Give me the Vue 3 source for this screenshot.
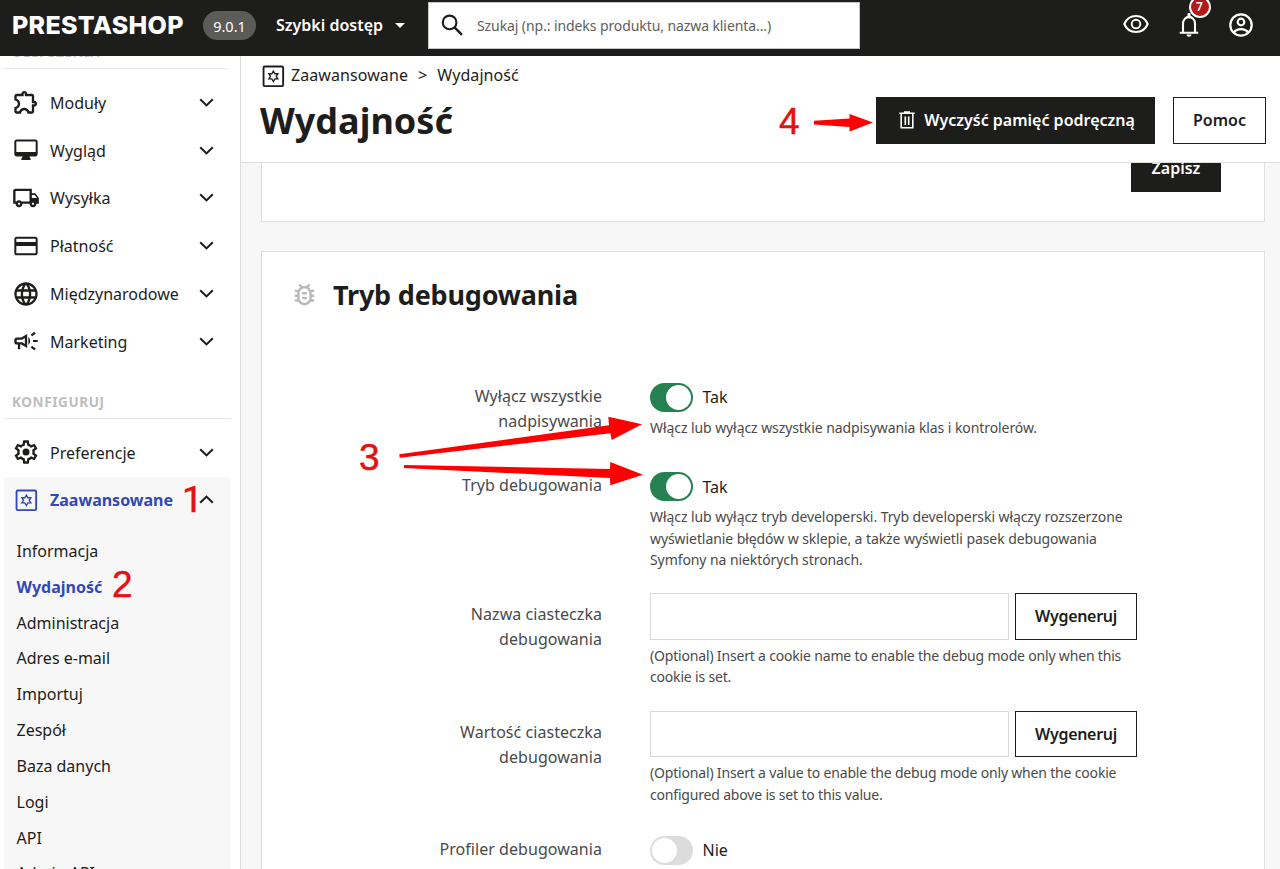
<script setup>
const icons = {
  modules: 'M10.5 4.5c.28 0 .5.22.5.5v2h6v6h2c.28 0 .5.22.5.5s-.22.5-.5.5h-2v6h-2.12c-.68-1.75-2.39-3-4.38-3s-3.7 1.25-4.38 3H4v-2.12c1.75-.68 3-2.39 3-4.38 0-1.99-1.24-3.7-2.99-4.38L4 7h6V5c0-.28.22-.5.5-.5m0-2C9.12 2.5 8 3.62 8 5H4c-1.1 0-1.99.9-1.99 2v3.8h.29c1.49 0 2.7 1.21 2.7 2.7s-1.21 2.7-2.7 2.7H2V20c0 1.1.9 2 2 2h3.8v-.3c0-1.49 1.21-2.7 2.7-2.7s2.7 1.21 2.7 2.7v.3H17c1.1 0 2-.9 2-2v-4c1.38 0 2.5-1.12 2.5-2.5S20.38 11 19 11V7c0-1.1-.9-2-2-2h-4c0-1.38-1.12-2.5-2.5-2.5z',
  design: 'M20 3H4c-1.1 0-2 .9-2 2v10.500c0 1.100.9 2 2 2h5.200l-1.200 2v1h8v-1l-1.200-2H20c1.100 0 2-.9 2-2V5c0-1.100-.9-2-2-2zm.3 10.700H3.700V4.800h16.600v8.900z',
  shipping: 'M20 8h-3V4H3c-1.1 0-2 .9-2 2v11h2c0 1.66 1.34 3 3 3s3-1.34 3-3h6c0 1.66 1.34 3 3 3s3-1.34 3-3h2v-5l-3-4zm-.5 1.5l1.96 2.5H17V9.5h2.5zM6 18c-.55 0-1-.45-1-1s.45-1 1-1 1 .45 1 1-.45 1-1 1zm2.22-3c-.55-.61-1.33-1-2.22-1s-1.67.39-2.22 1H3V6h12v9H8.22zM18 18c-.55 0-1-.45-1-1s.45-1 1-1 1 .45 1 1-.45 1-1 1z',
  payment: 'M20 4H4c-1.11 0-1.99.89-1.99 2L2 18c0 1.11.89 2 2 2h16c1.11 0 2-.89 2-2V6c0-1.11-.89-2-2-2zm.3 14.3H3.7V12h16.6v6.3zm0-9.8H3.7V5.7h16.6v2.8z',
  globe: 'M11.99 2C6.47 2 2 6.48 2 12s4.47 10 9.99 10C17.52 22 22 17.52 22 12S17.52 2 11.99 2zm6.93 6h-2.95c-.32-1.25-.78-2.45-1.38-3.56 1.84.63 3.37 1.91 4.33 3.56zM12 4.04c.83 1.2 1.48 2.53 1.91 3.96h-3.82c.43-1.43 1.08-2.76 1.91-3.96zM4.26 14C4.1 13.36 4 12.69 4 12s.1-1.36.26-2h3.38c-.08.66-.14 1.32-.14 2 0 .68.06 1.34.14 2H4.26zm.82 2h2.95c.32 1.25.78 2.45 1.38 3.56-1.84-.63-3.37-1.9-4.33-3.56zm2.95-8H5.08c.96-1.66 2.49-2.93 4.33-3.56C8.81 5.55 8.35 6.75 8.03 8zM12 19.96c-.83-1.2-1.48-2.53-1.91-3.96h3.82c-.43 1.43-1.08 2.76-1.91 3.96zM14.34 14H9.66c-.09-.66-.16-1.32-.16-2 0-.68.07-1.35.16-2h4.68c.09.65.16 1.32.16 2 0 .68-.07 1.34-.16 2zm.25 5.56c.6-1.11 1.06-2.31 1.38-3.56h2.95c-.96 1.65-2.49 2.93-4.33 3.56zM16.36 14c.08-.66.14-1.32.14-2 0-.68-.06-1.34-.14-2h3.38c.16.64.26 1.31.26 2s-.1 1.36-.26 2h-3.38z',
  marketing: 'M18 11.2v1.6h4v-1.6h-4zM16 17.61c.96.71 2.21 1.65 3.2 2.39.4-.53.8-1.07 1.2-1.6-.99-.74-2.24-1.68-3.2-2.4-.4.54-.8 1.08-1.2 1.61zM20.4 5.6c-.4-.53-.8-1.07-1.2-1.6-.99.74-2.24 1.68-3.2 2.4.4.53.8 1.07 1.2 1.6.96-.72 2.21-1.65 3.2-2.4zM4 9c-1.1 0-2 .9-2 2v2c0 1.1.9 2 2 2h1v4h2v-4h1l5 3V6L8 9H4zm5.03 1.71L11 9.53v4.94l-1.97-1.18-.48-.29H4v-2h4.55l.48-.29zM15.5 12c0-1.33-.58-2.53-1.5-3.35v6.69c.92-.81 1.5-2.01 1.5-3.34z',
  settings: 'M19.43 12.98c.04-.32.07-.64.07-.98 0-.34-.03-.66-.07-.98l2.11-1.65c.19-.15.24-.42.12-.64l-2-3.46c-.09-.16-.26-.25-.44-.25-.06 0-.12.01-.17.03l-2.49 1c-.52-.4-1.08-.73-1.69-.98l-.38-2.65C14.46 2.18 14.25 2 14 2h-4c-.25 0-.46.18-.49.42l-.38 2.65c-.61.25-1.17.59-1.69.98l-2.49-1c-.06-.02-.12-.03-.18-.03-.17 0-.34.09-.43.25l-2 3.46c-.13.22-.07.49.12.64l2.11 1.65c-.04.32-.07.65-.07.98 0 .33.03.66.07.98l-2.11 1.65c-.19.15-.24.42-.12.64l2 3.46c.09.16.26.25.44.25.06 0 .12-.01.17-.03l2.49-1c.52.4 1.08.73 1.69.98l.38 2.65c.03.24.24.42.49.42h4c.25 0 .46-.18.49-.42l.38-2.65c.61-.25 1.17-.59 1.69-.98l2.49 1c.06.02.12.03.18.03.17 0 .34-.09.43-.25l2-3.46c.12-.22.07-.49-.12-.64l-2.11-1.65zm-1.98-1.71c.04.31.05.52.05.73 0 .21-.02.43-.05.73l-.14 1.13.89.7 1.08.84-.7 1.21-1.27-.51-1.04-.42-.9.68c-.43.32-.84.56-1.25.73l-1.06.43-.16 1.13-.2 1.35h-1.4l-.19-1.35-.16-1.13-1.06-.43c-.43-.18-.83-.41-1.23-.71l-.91-.7-1.06.43-1.27.51-.7-1.21 1.08-.84.89-.7-.14-1.13c-.03-.31-.05-.54-.05-.74s.02-.43.05-.73l.14-1.13-.89-.7-1.08-.84.7-1.21 1.27.51 1.04.42.9-.68c.43-.32.84-.56 1.25-.73l1.06-.43.16-1.13.2-1.35h1.39l.19 1.35.16 1.13 1.06.43c.43.18.83.41 1.23.71l.91.7 1.06-.43 1.27-.51.7 1.21-1.07.85-.89.7.14 1.13zM12 9a3 3 0 1 0 0 6 3 3 0 1 0 0-6z',
  bug: 'M20 8h-2.81c-.45-.78-1.07-1.45-1.82-1.96L17 4.41 15.59 3l-2.17 2.17C12.96 5.06 12.49 5 12 5c-.49 0-.96.06-1.41.17L8.41 3 7 4.41l1.62 1.63C7.88 6.55 7.26 7.22 6.81 8H4v2h2.09c-.05.33-.09.66-.09 1v1H4v2h2v1c0 .34.04.67.09 1H4v2h2.81c1.04 1.79 2.97 3 5.19 3s4.15-1.21 5.19-3H20v-2h-2.09c.05-.33.09-.66.09-1v-1h2v-2h-2v-1c0-.34-.04-.67-.09-1H20V8zm-4 4v3c0 .22-.03.47-.07.7l-.1.65-.37.65c-.72 1.24-2.04 2-3.46 2s-2.74-.77-3.46-2l-.37-.64-.1-.65C8.03 15.48 8 15.23 8 15v-4c0-.23.03-.48.07-.7l.1-.65.37-.65c.3-.52.72-.97 1.21-1.31l.57-.39.74-.18c.31-.08.63-.12.94-.12.32 0 .63.04.95.12l.68.16.61.42c.5.34.91.78 1.21 1.31l.38.65.1.65c.04.22.07.47.07.69v1zm-6 2h4v2h-4zm0-4h4v2h-4z',
}

const sellMenu = [
  { label: 'Moduły', icon: 'modules' },
  { label: 'Wygląd', icon: 'design' },
  { label: 'Wysyłka', icon: 'shipping' },
  { label: 'Płatność', icon: 'payment' },
  { label: 'Międzynarodowe', icon: 'globe' },
  { label: 'Marketing', icon: 'marketing' },
]

const submenu = ['Informacja', 'Wydajność', 'Administracja', 'Adres e-mail', 'Importuj', 'Zespół', 'Baza danych', 'Logi', 'API', 'Admin API']

const rows = [
  { label: 'Wyłącz wszystkie nadpisywania', type: 'switch', on: true, help: 'Włącz lub wyłącz wszystkie nadpisywania klas i kontrolerów.' },
  { label: 'Tryb debugowania', type: 'switch', on: true, help: 'Włącz lub wyłącz tryb developerski. Tryb developerski włączy rozszerzone wyświetlanie błędów w sklepie, a także wyświetli pasek debugowania Symfony na niektórych stronach.' },
  { label: 'Nazwa ciasteczka debugowania', type: 'text', help: '(Optional) Insert a cookie name to enable the debug mode only when this cookie is set.' },
  { label: 'Wartość ciasteczka debugowania', type: 'text', help: '(Optional) Insert a value to enable the debug mode only when the cookie configured above is set to this value.' },
  { label: 'Profiler debugowania', type: 'switch', on: false, help: '' },
]
</script>

<template>
  <div class="page">
    <header class="topbar">
      <div class="logo">PRESTASHOP</div>
      <div class="version">9.0.1</div>
      <div class="quick">Szybki dostęp<i class="caret"></i></div>
      <div class="search">
        <svg width="24" height="24" viewBox="0 0 24 24" fill="none" stroke="#1d1d1b" stroke-width="2.1">
          <circle cx="8.6" cy="9.4" r="6.8" /><path d="M13.500 14.300 21 21.800" stroke-width="2.5" />
        </svg>
        <span>Szukaj (np.: indeks produktu, nazwa klienta...)</span>
      </div>
      <div class="actions">
        <svg class="eye" width="26" height="20" viewBox="0 0 26 20" fill="none" stroke="#fff">
          <path d="M1.3 10C3.4 5 7.8 2 13 2s9.600 3 11.700 8c-2.100 5-6.500 8-11.700 8S3.400 15 1.300 10z" stroke-width="2.100" />
          <circle cx="13" cy="10" r="4.300" stroke-width="1.900" />
        </svg>
        <div class="bell">
          <svg width="20" height="24" viewBox="0 0 20 24" fill="none" stroke="#fff" stroke-width="2.100">
            <path d="M4 19.300V10.500a6 6.600 0 0 1 12 0v8.800M.7 19.700h18.600" />
            <path d="M10 1v3" stroke-width="3" stroke-linecap="round" />
            <path d="M7.500 21.500h5a2.500 2.300 0 0 1-5 0z" fill="#fff" stroke="none" />
          </svg>
          <span class="badge">7</span>
        </div>
        <svg class="user" width="24" height="24" viewBox="0 0 24 24" fill="none" stroke="#fff" stroke-width="2.200">
          <circle cx="12" cy="12" r="10.700" /><circle cx="12" cy="9" r="3.300" />
          <path d="M5 19.500c1.600-2.300 4.200-3.300 7-3.300s5.400 1 7 3.300" />
        </svg>
      </div>
    </header>

    <div class="body">
      <nav class="sidebar">
        <div class="section first">ULEPSZENIA</div>
        <div v-for="item in sellMenu" :key="item.label" class="item">
          <svg class="ico" viewBox="0 0 24 24"><path :d="icons[item.icon]" /></svg>
          <span>{{ item.label }}</span>
          <svg class="chev" viewBox="0 0 15 9"><path d="M1.200 1.200 7.500 7.400l6.300-6.200" /></svg>
        </div>
        <div class="section">KONFIGURUJ</div>
        <div class="item pref">
          <svg class="ico" viewBox="0 0 24 24"><path :d="icons.settings" /></svg>
          <span>Preferencje</span>
          <svg class="chev" viewBox="0 0 15 9"><path d="M1.200 1.200 7.500 7.400l6.300-6.200" /></svg>
        </div>
        <div class="open">
          <div class="item active">
            <svg class="ico line" viewBox="0 0 24 24">
              <rect x="3.900" y="3.900" width="16.800" height="16.800" rx="1" stroke-width="1.600" />
              <path d="M12.300 7.900l1.300 2.200h2.500l-1.300 2.200 1.300 2.200h-2.500l-1.300 2.200-1.300-2.200H8.500l1.300-2.200-1.300-2.200H11z" stroke-width="1.200" />
            </svg>
            <span>Zaawansowane</span>
            <svg class="chev" viewBox="0 0 15 9"><path d="M1.200 7.800 7.500 1.600l6.300 6.200" /></svg>
          </div>
          <ul class="sub">
            <li v-for="s in submenu" :key="s" :class="{ current: s === 'Wydajność' }">{{ s }}</li>
          </ul>
        </div>
      </nav>

      <main class="main">
        <div class="head">
          <div class="titles">
            <div class="crumbs">
              <svg class="ico line" viewBox="0 0 24 24">
                <rect x="3.900" y="3.900" width="16.800" height="16.800" rx="1" stroke-width="1.600" />
                <path d="M12.300 7.900l1.300 2.200h2.500l-1.300 2.200 1.300 2.200h-2.500l-1.300 2.200-1.300-2.200H8.500l1.300-2.200-1.300-2.200H11z" stroke-width="1.200" />
              </svg>
              <span>Zaawansowane</span><span class="sep">&gt;</span><span>Wydajność</span>
            </div>
            <h1>Wydajność</h1>
          </div>
          <div class="buttons">
            <button class="btn dark clear">
              <svg width="16" height="18" viewBox="0 0 16 18" fill="none" stroke="#fff" stroke-width="1.600">
                <path d="M.3 2.200h15.400M5 1h6M2.200 2.500v14.200h11.600V2.500M6.300 5.500v8.500M9.700 5.500v8.500" />
              </svg>
              Wyczyść pamięć podręczną
            </button>
            <button class="btn help-btn">Pomoc</button>
          </div>
        </div>

        <div class="content">
          <section class="panel prev"><button class="btn dark save">Zapisz</button></section>
          <section class="panel debug">
            <h2><svg viewBox="0 0 24 24"><path :d="icons.bug" /></svg>Tryb debugowania</h2>
            <div class="form">
              <template v-for="row in rows" :key="row.label">
                <label :class="{ low: row.type === 'text' }">{{ row.label }}</label>
                <div class="field">
                  <div v-if="row.type === 'switch'" class="switch-line">
                    <i class="switch" :class="{ on: row.on }"></i><span>{{ row.on ? 'Tak' : 'Nie' }}</span>
                  </div>
                  <div v-else class="input-line">
                    <input type="text" /><button class="btn gen">Wygeneruj</button>
                  </div>
                  <p v-if="row.help" :class="{ en: row.type === 'text' }">{{ row.help }}</p>
                </div>
              </template>
            </div>
          </section>
        </div>
      </main>
    </div>

    <svg class="arrows" width="1280" height="869" viewBox="0 0 1280 869" fill="#fe0000">
      <path d="M399.300 454.300 609 425.300 608.300 416.700 642 424.300 611.700 440 610.300 433.300 399.700 457.700z" />
      <path d="M404 465 610 469 610.300 462 643 474.700 610.300 485.300 610 478 404 468z" />
      <path d="M814 120.800 849.500 118.500 849.500 114 873 122.500 849.500 131.500 849.500 127 814 124.500z" />
    </svg>
    <span class="mark m1">1</span>
    <span class="mark m2">2</span>
    <span class="mark m3">3</span>
    <span class="mark m4">4</span>
  </div>
</template>

<style>
html, body { margin: 0; overflow: hidden; }
</style>

<style scoped>
* { box-sizing: border-box; }
.page { position: relative; width: 1280px; height: 869px; overflow: hidden; display: flex; flex-direction: column; background: #f7f7f7; color: #1d1d1b; font: 16px/24px "Noto Sans", "Open Sans", sans-serif; }
svg { display: block; flex: none; }
button, input { font: inherit; color: inherit; margin: 0; padding: 0; }

.topbar { height: 56px; flex: none; background: #1d1d1b; color: #fff; display: flex; align-items: flex-start; }
.logo { width: 191px; margin: 10px 0 0 12px; font: 800 25px/31px Inter, sans-serif; letter-spacing: .3px; }
.version { width: 53px; height: 29px; margin-top: 11px; border-radius: 15px; background: #5b5b5a; font-size: 14.500px; line-height: 30px; text-align: center; }
.quick { display: flex; align-items: center; gap: 12px; margin: 13px 0 0 20px; width: 152px; font-weight: 600; white-space: nowrap; }
.caret { border: 5px solid transparent; border-top: 5.500px solid #fff; border-bottom: 0; }
.search { width: 432px; height: 47px; margin-top: 1.500px; background: #fff; border: 1px solid #c4c4c4; display: flex; align-items: center; padding-left: 12px; color: #5e5e5e; font-size: 14px; letter-spacing: -.09px; }
.search svg { margin-right: 12px; }
.search span { margin-top: 2px; }
.actions { display: flex; margin-left: 263px; }
.eye { margin-top: 14px; }
.bell { position: relative; margin: 13px 0 0 29.500px; }
.badge { position: absolute; left: 10px; top: -17px; width: 22px; height: 22px; border: 2px solid #fff; border-radius: 50%; background: #b3191b; font-size: 12px; font-weight: 600; line-height: 18px; text-align: center; }
.user { margin: 13px 0 0 30.500px; }

.body { display: flex; flex: 1; min-height: 0; }
.sidebar { width: 241px; border-right: 1px solid #dcdcdc; background: #fff; overflow: hidden; }
.section { margin: 24px 9px 0 4px; padding-left: 8px; height: 29px; border-bottom: 1px solid #e8e8e8; font-size: 13.500px; line-height: 24px; font-weight: 700; letter-spacing: .6px; color: #bdbdbd; }
.section.first { margin: -16px 12px 10px 3px; padding-left: 9px; }
.item { display: flex; align-items: center; height: 47.800px; padding-left: 12px; }
.item span { width: 149px; margin-left: 10px; }
.ico { width: 28px; height: 28px; fill: #1d1d1b; }
.item .ico { margin-top: -1px; }
.ico.line { fill: none; stroke: #1d1d1b; }
.chev { width: 15px; height: 9px; margin-top: -1px; fill: none; stroke: #1d1d1b; stroke-width: 2.100; }
.pref { margin-top: 10px; }
.open { margin: 0 10px 0 4px; background: #f7f7f7; height: 400px; }
.active { padding-left: 8px; }
.active span { color: #3149b5; font-weight: 700; }
.active .ico.line { stroke: #3149b5; }
.sub { list-style: none; margin: 9.500px 0 0; padding: 0 0 0 12.500px; }
.sub li { height: 35.850px; line-height: 35px; }
.current { color: #3149b5; font-weight: 700; }

.main { flex: 1; min-width: 0; display: flex; flex-direction: column; }
.head { height: 107px; flex: none; background: #fff; border-bottom: 1px solid #dedede; display: flex; justify-content: space-between; padding: 6px 14px 0 18px; }
.crumbs { display: flex; align-items: center; height: 28px; }
.crumbs .ico { margin-right: 4px; }
.crumbs span { margin-top: -3px; letter-spacing: .08px; }
.crumbs .sep { margin: -2px 10px 0; }
h1 { margin: 7px 0 0 1px; font-size: 36px; line-height: 48px; font-weight: 700; }
.buttons { display: flex; gap: 18px; margin-top: 35px; }
.btn { height: 46.500px; border: 1px solid #1d1d1b; background: #fff; font-weight: 600; white-space: nowrap; }
.btn.dark { background: #1d1d1b; color: #fff; }
.clear { width: 279px; display: flex; align-items: center; justify-content: center; gap: 9px; padding-left: 3px; }
.help-btn { width: 93px; }

.content { flex: 1; min-height: 0; overflow: hidden; padding: 0 15px 0 19.500px; }
.panel { background: #fff; border: 1px solid #dfdfdf; }
.prev { height: 59px; margin-top: -.500px; border-top: 0; display: flex; justify-content: flex-end; align-items: flex-start; padding-right: 43px; }
.save { width: 90px; margin-top: -17.500px; }
.debug { margin-top: 29px; height: 700px; }
h2 { display: flex; align-items: center; margin: 25px 0 0 28.500px; height: 36px; font-size: 27px; line-height: 36px; font-weight: 700; letter-spacing: -.2px; }
h2 svg { width: 29px; height: 29px; margin-right: 14px; fill: #b9b9b9; }
.form { display: grid; grid-template-columns: 180px 488px; grid-template-rows: 89.500px 121px 117.500px 125px 60px; column-gap: 48px; margin: 70px 0 0 160.500px; }
label { padding-top: 1px; text-align: right; line-height: 25px; color: #4a4a4a; letter-spacing: .05px; }
label.low { padding-top: 9px; }
.switch-line { display: flex; align-items: center; height: 29px; }
.switch { width: 43px; height: 29px; border-radius: 15px; background: #dcdcdc; margin-right: 9.500px; display: flex; padding: 2px; }
.switch::before { content: ""; width: 25px; height: 25px; border-radius: 50%; background: #fff; }
.switch.on { background: #268150; justify-content: flex-end; }
p { margin: 5px 0 0; font-size: 14px; line-height: 21.500px; color: #4a4a4a; letter-spacing: -.08px; }
p.en { letter-spacing: -.18px; }
.input-line { display: flex; gap: 6px; }
.input-line input { width: 359px; height: 46.500px; border: 1px solid #d9d9d9; background: #fff; }
.gen { width: 122px; letter-spacing: -.3px; }

.arrows { position: absolute; left: 0; top: 0; }
.mark { position: absolute; font: 37px/40px "Liberation Sans", Arial, sans-serif; color: #e3110f; -webkit-text-stroke: .5px #e3110f; }
.m1 { left: 182px; top: 480px; font-family: Roboto, sans-serif; }
.m2 { left: 112px; top: 565px; }
.m3 { left: 359px; top: 438px; }
.m4 { left: 779px; top: 102px; }
</style>
